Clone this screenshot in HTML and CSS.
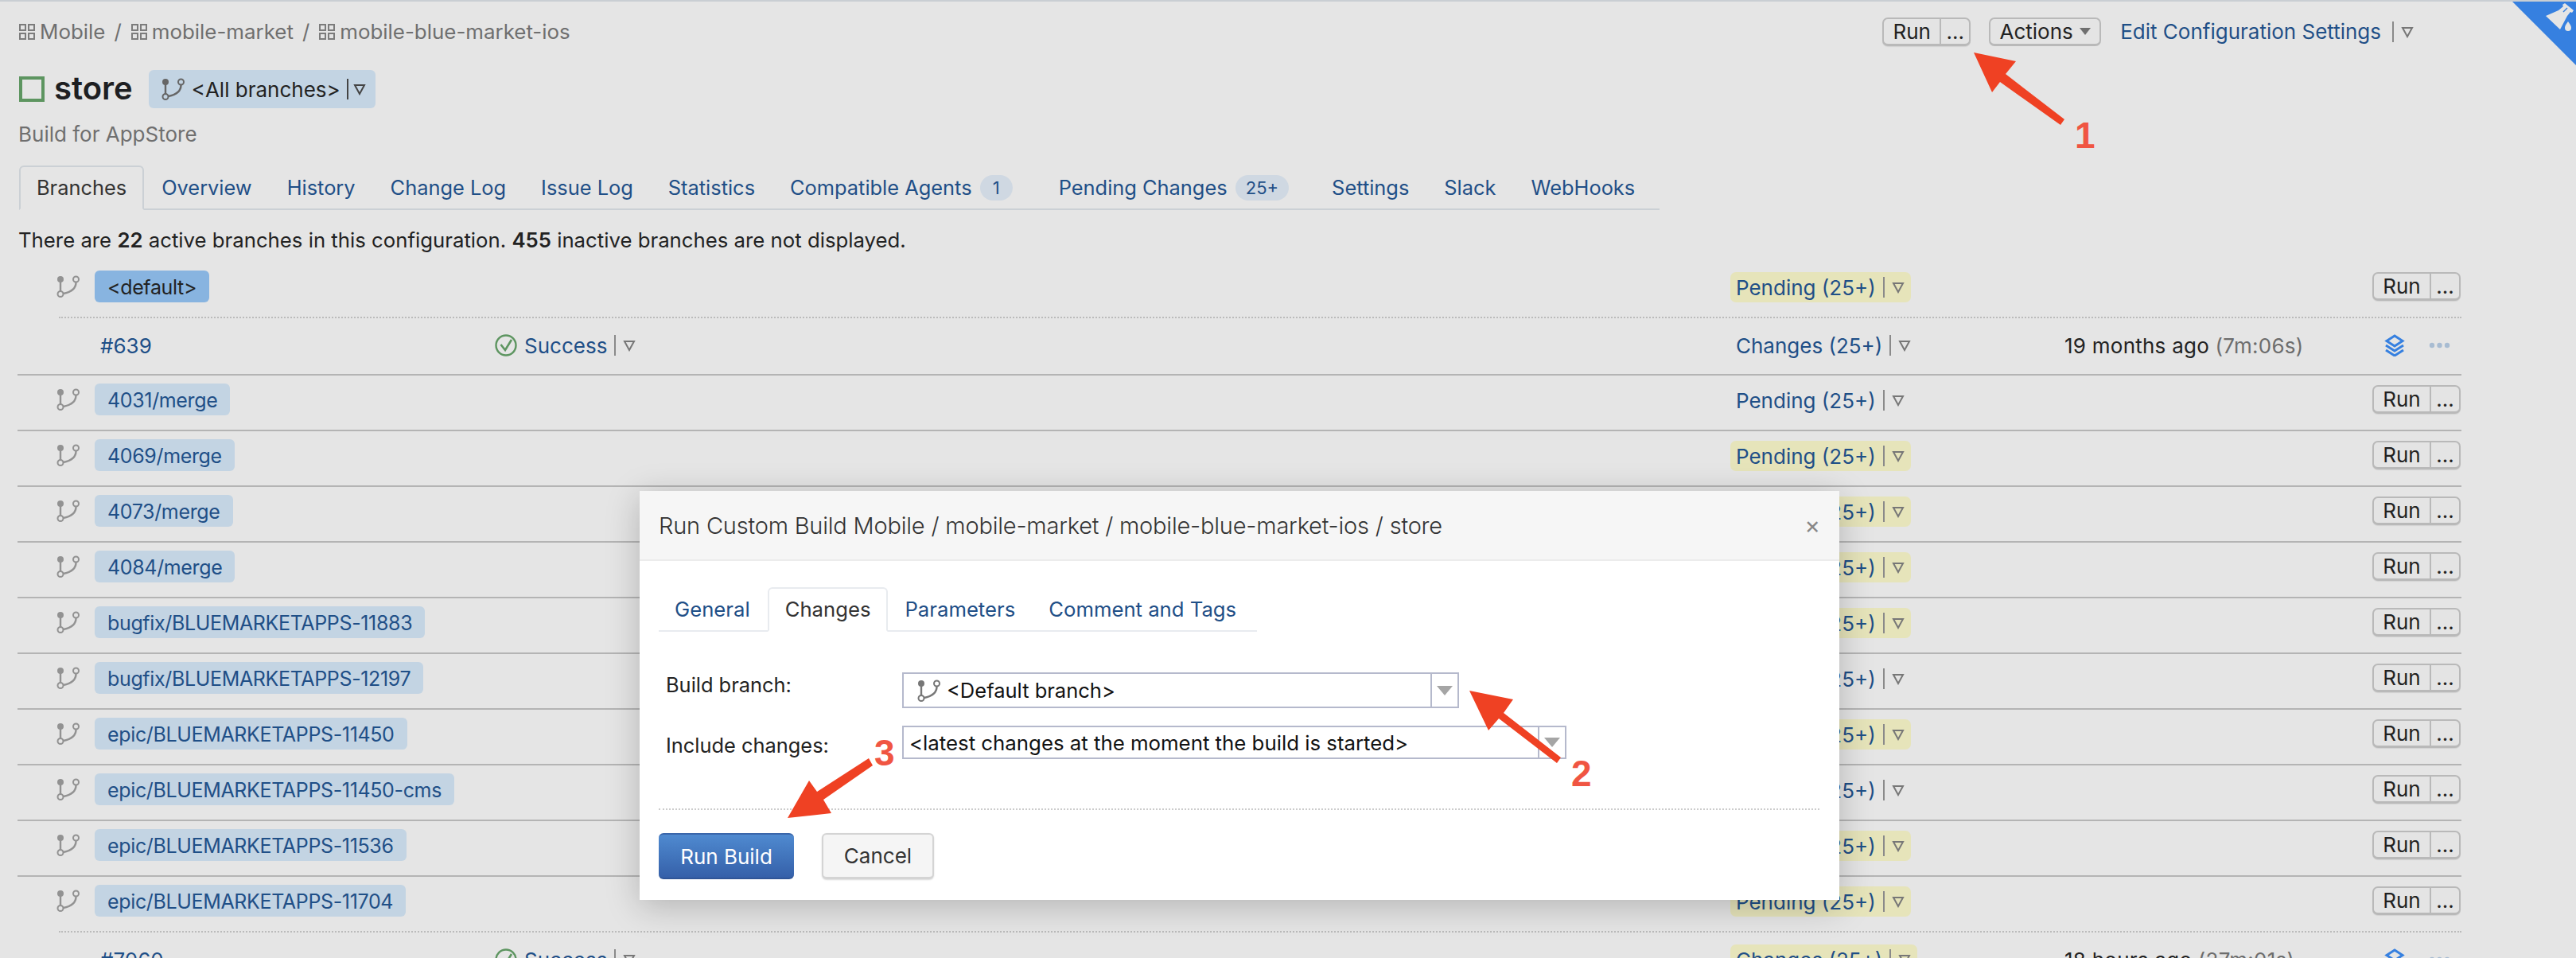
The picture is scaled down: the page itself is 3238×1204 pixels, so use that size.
FILE: index.html
```html
<!DOCTYPE html>
<html lang="en">
<head>
  <meta charset="UTF-8">
  <title>store - Build for AppStore</title>
  <link rel="stylesheet" href="styles.css">
</head>
<body>
  <!-- shared icons -->
  <svg class="icon-defs" width="0" height="0">
    <symbol id="i-branch" viewBox="0 0 29 28">
      <circle cx="5" cy="5" r="4" fill="currentColor"/>
      <circle cx="5" cy="23.5" r="3.5" fill="none" stroke="currentColor" stroke-width="2"/>
      <circle cx="24.5" cy="5" r="3.5" fill="none" stroke="currentColor" stroke-width="2"/>
      <path d="M5 8v12M24.5 9c0 7-6 12-16 14" fill="none" stroke="currentColor" stroke-width="2.4"/>
    </symbol>
    <symbol id="i-project" viewBox="0 0 20 20">
      <path d="M1 1h7v7H1zM12 1h7v7h-7zM1 12h7v7H1zM12 12h7v7h-7z" fill="none" stroke="currentColor" stroke-width="2"/>
    </symbol>
    <symbol id="i-caret" viewBox="0 0 16 16">
      <path d="M2 3h12L8 14z" fill="none" stroke="currentColor" stroke-width="2"/>
    </symbol>
    <symbol id="i-ok" viewBox="0 0 28 28">
      <circle cx="14" cy="14" r="12.5" fill="none" stroke="currentColor" stroke-width="2.4"/>
      <path d="M7.5 13l5.5 7 8-13" fill="none" stroke="currentColor" stroke-width="2.6"/>
    </symbol>
    <symbol id="i-stack" viewBox="0 0 28 28">
      <path d="M14 2l10 6.5L14 15 4 8.5z" fill="none" stroke="currentColor" stroke-width="3"/>
      <path d="M3 14l11 7 11-7M3 20l11 7 11-7" fill="none" stroke="currentColor" stroke-width="3"/>
    </symbol>
    <symbol id="i-dots" viewBox="0 0 27 8">
      <circle cx="4" cy="4" r="3.2" fill="currentColor"/>
      <circle cx="13.5" cy="4" r="3.2" fill="currentColor"/>
      <circle cx="23" cy="4" r="3.2" fill="currentColor"/>
    </symbol>
  </svg>

  <div class="top-bar">
    <nav class="crumbs">
      <svg class="crumb-icon"><use href="#i-project"/></svg><a>Mobile</a><span class="slash">/</span>
      <svg class="crumb-icon"><use href="#i-project"/></svg><a>mobile-market</a><span class="slash">/</span>
      <svg class="crumb-icon"><use href="#i-project"/></svg><a>mobile-blue-market-ios</a>
    </nav>
    <div class="top-actions">
      <div class="run-btn"><span class="run-main">Run</span><span class="run-more">...</span></div>
      <button class="actions-btn">Actions <i class="mini-caret"></i></button>
      <a class="link edit-link">Edit Configuration Settings</a>
      <i class="sep"></i><svg class="caret"><use href="#i-caret"/></svg>
    </div>
  </div>

  <div class="title-row">
    <span class="status-square"></span>
    <h1 class="build-name">store</h1>
    <div class="branch-select">
      <svg class="branch-icon"><use href="#i-branch"/></svg>
      <span>&lt;All branches&gt;</span>
      <i class="sep"></i><svg class="caret"><use href="#i-caret"/></svg>
    </div>
  </div>
  <p class="desc">Build for AppStore</p>

  <ul class="tabs">
    <li class="tab active">Branches</li>
    <li class="tab">Overview</li>
    <li class="tab">History</li>
    <li class="tab">Change Log</li>
    <li class="tab">Issue Log</li>
    <li class="tab">Statistics</li>
    <li class="tab">Compatible Agents <span class="count one">1</span></li>
    <li class="tab">Pending Changes <span class="count">25+</span></li>
    <li class="tab">Settings</li>
    <li class="tab">Slack</li>
    <li class="tab">WebHooks</li>
  </ul>

  <p class="summary">There are <b>22</b> active branches in this configuration. <b>455</b> inactive branches are not displayed.</p>

  <div class="branches">
    <div class="branch-row first">
      <svg class="branch-icon"><use href="#i-branch"/></svg>
      <div><span class="pill default">&lt;default&gt;</span></div>
      <div class="split hot"><a class="link">Pending (25+)</a><i class="sep"></i><svg class="caret"><use href="#i-caret"/></svg></div>
      <div class="run-btn"><span class="run-main">Run</span><span class="run-more">...</span></div>
    </div>
    <div class="build-row">
      <a class="link">#639</a>
      <div class="result"><svg class="ok-icon"><use href="#i-ok"/></svg><a class="link">Success</a><i class="sep"></i><svg class="caret"><use href="#i-caret"/></svg></div>
      <div class="split"><a class="link">Changes (25+)</a><i class="sep"></i><svg class="caret"><use href="#i-caret"/></svg></div>
      <div class="when">19 months ago <span class="muted">(7m:06s)</span></div>
      <div class="row-tools"><svg class="stack-icon"><use href="#i-stack"/></svg><svg class="dots-icon"><use href="#i-dots"/></svg></div>
    </div>
    <div class="branch-row">
      <svg class="branch-icon"><use href="#i-branch"/></svg>
      <div><span class="pill">4031/merge</span></div>
      <div class="split"><a class="link">Pending (25+)</a><i class="sep"></i><svg class="caret"><use href="#i-caret"/></svg></div>
      <div class="run-btn"><span class="run-main">Run</span><span class="run-more">...</span></div>
    </div>
    <div class="branch-row">
      <svg class="branch-icon"><use href="#i-branch"/></svg>
      <div><span class="pill">4069/merge</span></div>
      <div class="split hot"><a class="link">Pending (25+)</a><i class="sep"></i><svg class="caret"><use href="#i-caret"/></svg></div>
      <div class="run-btn"><span class="run-main">Run</span><span class="run-more">...</span></div>
    </div>
    <div class="branch-row">
      <svg class="branch-icon"><use href="#i-branch"/></svg>
      <div><span class="pill">4073/merge</span></div>
      <div class="split hot"><a class="link">Pending (25+)</a><i class="sep"></i><svg class="caret"><use href="#i-caret"/></svg></div>
      <div class="run-btn"><span class="run-main">Run</span><span class="run-more">...</span></div>
    </div>
    <div class="branch-row">
      <svg class="branch-icon"><use href="#i-branch"/></svg>
      <div><span class="pill">4084/merge</span></div>
      <div class="split hot"><a class="link">Pending (25+)</a><i class="sep"></i><svg class="caret"><use href="#i-caret"/></svg></div>
      <div class="run-btn"><span class="run-main">Run</span><span class="run-more">...</span></div>
    </div>
    <div class="branch-row">
      <svg class="branch-icon"><use href="#i-branch"/></svg>
      <div><span class="pill">bugfix/BLUEMARKETAPPS-11883</span></div>
      <div class="split hot"><a class="link">Pending (25+)</a><i class="sep"></i><svg class="caret"><use href="#i-caret"/></svg></div>
      <div class="run-btn"><span class="run-main">Run</span><span class="run-more">...</span></div>
    </div>
    <div class="branch-row">
      <svg class="branch-icon"><use href="#i-branch"/></svg>
      <div><span class="pill">bugfix/BLUEMARKETAPPS-12197</span></div>
      <div class="split"><a class="link">Pending (25+)</a><i class="sep"></i><svg class="caret"><use href="#i-caret"/></svg></div>
      <div class="run-btn"><span class="run-main">Run</span><span class="run-more">...</span></div>
    </div>
    <div class="branch-row">
      <svg class="branch-icon"><use href="#i-branch"/></svg>
      <div><span class="pill">epic/BLUEMARKETAPPS-11450</span></div>
      <div class="split hot"><a class="link">Pending (25+)</a><i class="sep"></i><svg class="caret"><use href="#i-caret"/></svg></div>
      <div class="run-btn"><span class="run-main">Run</span><span class="run-more">...</span></div>
    </div>
    <div class="branch-row">
      <svg class="branch-icon"><use href="#i-branch"/></svg>
      <div><span class="pill">epic/BLUEMARKETAPPS-11450-cms</span></div>
      <div class="split"><a class="link">Pending (25+)</a><i class="sep"></i><svg class="caret"><use href="#i-caret"/></svg></div>
      <div class="run-btn"><span class="run-main">Run</span><span class="run-more">...</span></div>
    </div>
    <div class="branch-row">
      <svg class="branch-icon"><use href="#i-branch"/></svg>
      <div><span class="pill">epic/BLUEMARKETAPPS-11536</span></div>
      <div class="split hot"><a class="link">Pending (25+)</a><i class="sep"></i><svg class="caret"><use href="#i-caret"/></svg></div>
      <div class="run-btn"><span class="run-main">Run</span><span class="run-more">...</span></div>
    </div>
    <div class="branch-row">
      <svg class="branch-icon"><use href="#i-branch"/></svg>
      <div><span class="pill">epic/BLUEMARKETAPPS-11704</span></div>
      <div class="split hot"><a class="link">Pending (25+)</a><i class="sep"></i><svg class="caret"><use href="#i-caret"/></svg></div>
      <div class="run-btn"><span class="run-main">Run</span><span class="run-more">...</span></div>
    </div>
    <div class="build-row">
      <a class="link">#7060</a>
      <div class="result"><svg class="ok-icon"><use href="#i-ok"/></svg><a class="link">Success</a><i class="sep"></i><svg class="caret"><use href="#i-caret"/></svg></div>
      <div class="split hot"><a class="link">Changes (25+)</a><i class="sep"></i><svg class="caret"><use href="#i-caret"/></svg></div>
      <div class="when">18 hours ago <span class="muted">(27m:01s)</span></div>
      <div class="row-tools"><svg class="stack-icon"><use href="#i-stack"/></svg><svg class="dots-icon"><use href="#i-dots"/></svg></div>
    </div>
  </div>

  <!-- corner badge -->
  <svg class="corner" viewBox="0 0 80 82">
    <path d="M0 0h80v80z" fill="#3680e0"/>
    <path d="M42 18l16-7 6-5-1-2 3-2 11 9-2 3-2-1-4 5-9 17z" fill="#e5e5e5"/>
    <path d="M64 13l5-5" stroke="#3680e0" stroke-width="1.5"/>
    <path d="M70 25c3 4 4 6 4 8a4 4 0 0 1-8 0c0-2 1-4 4-8z" fill="#e5e5e5"/>
  </svg>

  <!-- Run Custom Build dialog -->
  <div class="dialog">
    <div class="dialog-head">
      <h2 class="dialog-title">Run Custom Build Mobile / mobile-market / mobile-blue-market-ios / store</h2>
      <span class="close">&times;</span>
    </div>
    <div class="dialog-body">
      <ul class="dialog-tabs">
        <li class="tab">General</li>
        <li class="tab active">Changes</li>
        <li class="tab">Parameters</li>
        <li class="tab">Comment and Tags</li>
      </ul>
      <div class="field branch-field">
        <label class="field-label">Build branch:</label>
        <div class="combo wide">
          <div class="combo-text"><svg class="branch-icon"><use href="#i-branch"/></svg>&lt;Default branch&gt;</div>
          <div class="combo-arrow"><i class="gray-caret"></i></div>
        </div>
      </div>
      <div class="field changes-field">
        <label class="field-label">Include changes:</label>
        <div class="combo">
          <div class="combo-text">&lt;latest changes at the moment the build is started&gt;</div>
          <div class="combo-arrow"><i class="gray-caret"></i></div>
        </div>
      </div>
      <div class="dialog-foot">
        <button class="primary-btn">Run Build</button>
        <button class="cancel-btn">Cancel</button>
      </div>
    </div>
  </div>

  <!-- red annotations drawn on top of the screenshot -->
  <svg class="marks" viewBox="0 0 3238 1204">
    <polygon points="2481,66 2534,77 2521,93 2595,150 2590,157 2514,103 2504,116"/>
    <polygon points="1847,868 1902,879 1890,896 1962,952 1957,959 1884,903 1871,918"/>
    <polygon points="990,1028 1017,981 1027,995 1092,953 1097,962 1035,1005 1045,1022"/>
    <text x="2608" y="186">1</text>
    <text x="1975" y="988">2</text>
    <text x="1099" y="962">3</text>
  </svg>
</body>
</html>
```

FILE: styles.css
```css
* {
  box-sizing: border-box;
}
body {
  margin: 0;
  width: 3238px;
  height: 1204px;
  overflow: hidden;
  position: relative;
  background: #e5e5e5;
  border-top: 2px solid #c9ced3;
  font-family: Inter, "Liberation Sans", sans-serif;
  font-size: 26px;
  color: #222;
}
p, h1, h2, ul {
  margin: 0;
  padding: 0;
}
ul {
  list-style: none;
}
.icon-defs {
  display: block;
  height: 0;
}
.link {
  color: #1f4f87;
}
.muted {
  color: #6d6d6d;
}

/* top bar */
.top-bar {
  display: flex;
  align-items: center;
  justify-content: space-between;
  height: 35px;
  margin-top: 20px;
  padding: 0 204px 0 24px;
}
.crumbs {
  display: flex;
  align-items: center;
  font-size: 25.9px;
  color: #6f6f6f;
}
.crumb-icon {
  width: 20px;
  height: 20px;
  margin-right: 6px;
  color: #7c7c7c;
}
.slash {
  margin: 0 12px 0 11px;
}
.top-actions {
  display: flex;
  align-items: center;
}
.run-btn {
  display: flex;
  width: 111px;
  height: 36px;
  border: 2px solid #b9b9b9;
  border-bottom-width: 3px;
  border-radius: 7px;
  background: #e4e4e4;
  line-height: 32px;
  box-shadow: 0 1px 1px rgba(0, 0, 0, .08);
}
.run-main {
  width: 72px;
  text-align: center;
  border-right: 2px solid #b9b9b9;
}
.run-more {
  flex: 1;
  text-align: center;
}
.actions-btn {
  display: flex;
  align-items: center;
  justify-content: center;
  gap: 8px;
  width: 141px;
  height: 36px;
  margin: 0 24px 0 23px;
  padding: 0;
  border: 2px solid #b9b9b9;
  border-bottom-width: 3px;
  border-radius: 7px;
  background: #e4e4e4;
  font: inherit;
  color: inherit;
}
.mini-caret {
  border: 7px solid transparent;
  border-top: 9px solid #6f6f6f;
  border-bottom: 0;
}
.edit-link {
  margin-right: 14px;
}
.sep {
  display: inline-block;
  width: 2px;
  height: 26px;
  background: #8a8a8a;
}
.caret {
  width: 16px;
  height: 16px;
  margin-left: 9px;
  color: #777;
}

/* title */
.title-row {
  display: flex;
  align-items: center;
  height: 48px;
  margin-top: 31px;
  padding-left: 24px;
}
.status-square {
  width: 32px;
  height: 32px;
  border: 4px solid #5d9560;
}
.build-name {
  margin: -3px 20px 0 12px;
  font-size: 40px;
  font-weight: 600;
  color: #1e1f22;
}
.branch-select {
  display: flex;
  align-items: center;
  width: 285px;
  height: 48px;
  padding-left: 16px;
  border-radius: 6px;
  background: #c3d4e3;
}
.branch-select .branch-icon {
  color: #666;
  margin-right: 9px;
}
.branch-select .sep {
  margin-left: 8px;
  height: 26px;
  background: #444;
}
.branch-select .caret {
  margin-left: 6px;
  color: #444;
}
.branch-icon {
  flex: none;
  width: 29px;
  height: 28px;
  color: #929292;
}
.desc {
  margin-top: 18px;
  padding-left: 23px;
  line-height: 30px;
  color: #6f6f6f;
}

/* tabs */
.tabs {
  display: flex;
  height: 56px;
  width: 2062px;
  margin: 24px 0 0 24px;
  border-bottom: 2px solid #cbd0d5;
  font-size: 25.4px;
}
.tab {
  height: 56px;
  padding: 0 22px;
  line-height: 56px;
  color: #1f4f87;
  white-space: nowrap;
}
.tab.active {
  padding: 0 20px;
  border: 2px solid #cbd0d5;
  border-bottom: 2px solid #e5e5e5;
  border-radius: 6px 6px 0 0;
  line-height: 52px;
  color: #333;
}
.count {
  display: inline-block;
  min-width: 41px;
  height: 32px;
  margin: 0 10px 0 3px;
  padding: 0 13px;
  border-radius: 16px;
  background: #cfd8e2;
  font-size: 22px;
  line-height: 32px;
  text-align: center;
  vertical-align: 1px;
}
.count.one {
  margin-right: 14px;
}
.summary {
  margin-top: 23px;
  padding-left: 23px;
  font-size: 25.75px;
  line-height: 30px;
}
.summary b {
  font-weight: 600;
}

/* branch table */
.branches {
  width: 3072px;
  margin: 13px 0 0 22px;
}
.branch-row {
  display: grid;
  grid-template-columns: 97px 2056px 807px 1fr;
  align-items: start;
  height: 70px;
  padding-top: 10px;
  border-top: 2px solid #b4b4b4;
}
.branch-row.first {
  height: 68px;
  border-top: 0;
}
.branch-row > .branch-icon {
  margin: 6px 0 0 49px;
}
.branch-row > .run-btn {
  margin-top: 2px;
}
.pill {
  display: inline-block;
  height: 40px;
  padding: 0 16px;
  border-radius: 6px;
  background: #c3d4e3;
  font-size: 25px;
  letter-spacing: -.35px;
  line-height: 42px;
  color: #1f4f87;
}
.pill.default {
  background: #88b4e0;
  color: #222;
}
.split {
  display: inline-flex;
  align-items: center;
  justify-self: start;
  height: 38px;
  margin-top: 2px;
  padding: 0 8px 0 7px;
  border-radius: 7px;
}
.split.hot {
  background: #e6e4ba;
}
.split .sep,
.result .sep {
  margin-left: 9px;
}
.build-row {
  display: grid;
  grid-template-columns: 496px 1553px 420px 401px 1fr;
  align-items: center;
  height: 72px;
  margin-left: 52px;
  padding: 0 0 2px 52px;
  border-top: 2px dotted #bbb;
}
.build-row > .link {
  display: block;
}
.build-row .split {
  margin-top: 0;
}
.result {
  display: flex;
  align-items: center;
}
.ok-icon {
  width: 28px;
  height: 28px;
  margin-right: 9px;
  color: #5d9560;
}
.when {
  white-space: nowrap;
  letter-spacing: .25px;
}
.row-tools {
  display: flex;
  align-items: center;
  gap: 29px;
}
.stack-icon {
  width: 28px;
  height: 28px;
  color: #3680e0;
}
.dots-icon {
  width: 27px;
  height: 8px;
  color: #a8bcd2;
}

/* corner badge sits over the page */
.corner {
  position: absolute;
  top: 0;
  right: 0;
  width: 80px;
  height: 82px;
}

/* dialog */
.dialog {
  position: absolute;
  left: 804px;
  top: 615px;
  width: 1508px;
  height: 514px;
  background: #fff;
  box-shadow: 0 8px 40px rgba(0, 0, 0, .22);
}
.dialog-head {
  display: flex;
  align-items: center;
  justify-content: space-between;
  height: 88px;
  padding: 0 24px;
  background: #f6f6f6;
  border-bottom: 2px solid #ececec;
}
.dialog-title {
  font-size: 29px;
  font-weight: 300;
  letter-spacing: -.2px;
  color: #333;
}
.close {
  font-size: 30px;
  color: #888;
}
.dialog-body {
  padding: 33px 25px 0 24px;
}
.dialog-tabs {
  display: flex;
  width: 752px;
  height: 56px;
  border-bottom: 2px solid #e8ebef;
  font-size: 25.7px;
}
.dialog-tabs .tab {
  padding: 0 21px;
}
.dialog-tabs .tab:first-child {
  padding: 0 22px 0 20px;
}
.dialog-tabs .tab.active {
  padding: 0 20px;
  border-color: #e8ebef;
  border-bottom-color: #fff;
}
.field {
  display: flex;
  padding-left: 9px;
}
.branch-field {
  margin-top: 51px;
}
.changes-field {
  margin-top: 22px;
}
.field-label {
  width: 297px;
  font-size: 25.4px;
  line-height: 30px;
}
.branch-field .field-label {
  margin-top: 1px;
}
.changes-field .field-label {
  margin-top: 10px;
}
.combo {
  display: flex;
  width: 835px;
  height: 42px;
  border: 2px solid #b5b9cc;
  font-size: 25.8px;
  line-height: 40px;
  color: #111;
}
.combo.wide {
  width: 700px;
  height: 45px;
  font-size: 25.5px;
}
.combo-text {
  flex: 1;
  display: flex;
  align-items: center;
  padding: 2px 0 0 7px;
  white-space: nowrap;
}
.wide .combo-text {
  padding: 0 0 0 17px;
}
.combo-text .branch-icon {
  margin-right: 8px;
  color: #777;
}
.combo-arrow {
  display: flex;
  align-items: center;
  justify-content: center;
  width: 34px;
  border-left: 2px solid #b5b9cc;
}
.gray-caret {
  border: 10px solid transparent;
  border-top: 12px solid #a5a5a5;
  border-bottom: 0;
}
.dialog-foot {
  display: flex;
  gap: 35px;
  margin-top: 62px;
  padding-top: 29px;
  border-top: 2px dotted #ccc;
}
.primary-btn,
.cancel-btn {
  height: 58px;
  padding: 0;
  border-radius: 6px;
  font: inherit;
}
.primary-btn {
  width: 170px;
  border: 0;
  border-top: 2px solid #3a66aa;
  border-bottom: 2px solid #2f5597;
  background: linear-gradient(#4f8ad0, #3560a9);
  color: #fff;
}
.cancel-btn {
  width: 141px;
  border: 2px solid #d4d4d4;
  border-bottom-width: 3px;
  background: #f5f5f5;
  color: #333;
  box-shadow: 0 1px 2px rgba(0, 0, 0, .15);
}

/* annotations */
.marks {
  position: absolute;
  left: 0;
  top: -2px;
  width: 3238px;
  height: 1204px;
  pointer-events: none;
}
.marks polygon {
  fill: #ef4123;
}
.marks text {
  font-family: "Liberation Sans", sans-serif;
  font-size: 46px;
  font-weight: 700;
  fill: #f05542;
}
```
